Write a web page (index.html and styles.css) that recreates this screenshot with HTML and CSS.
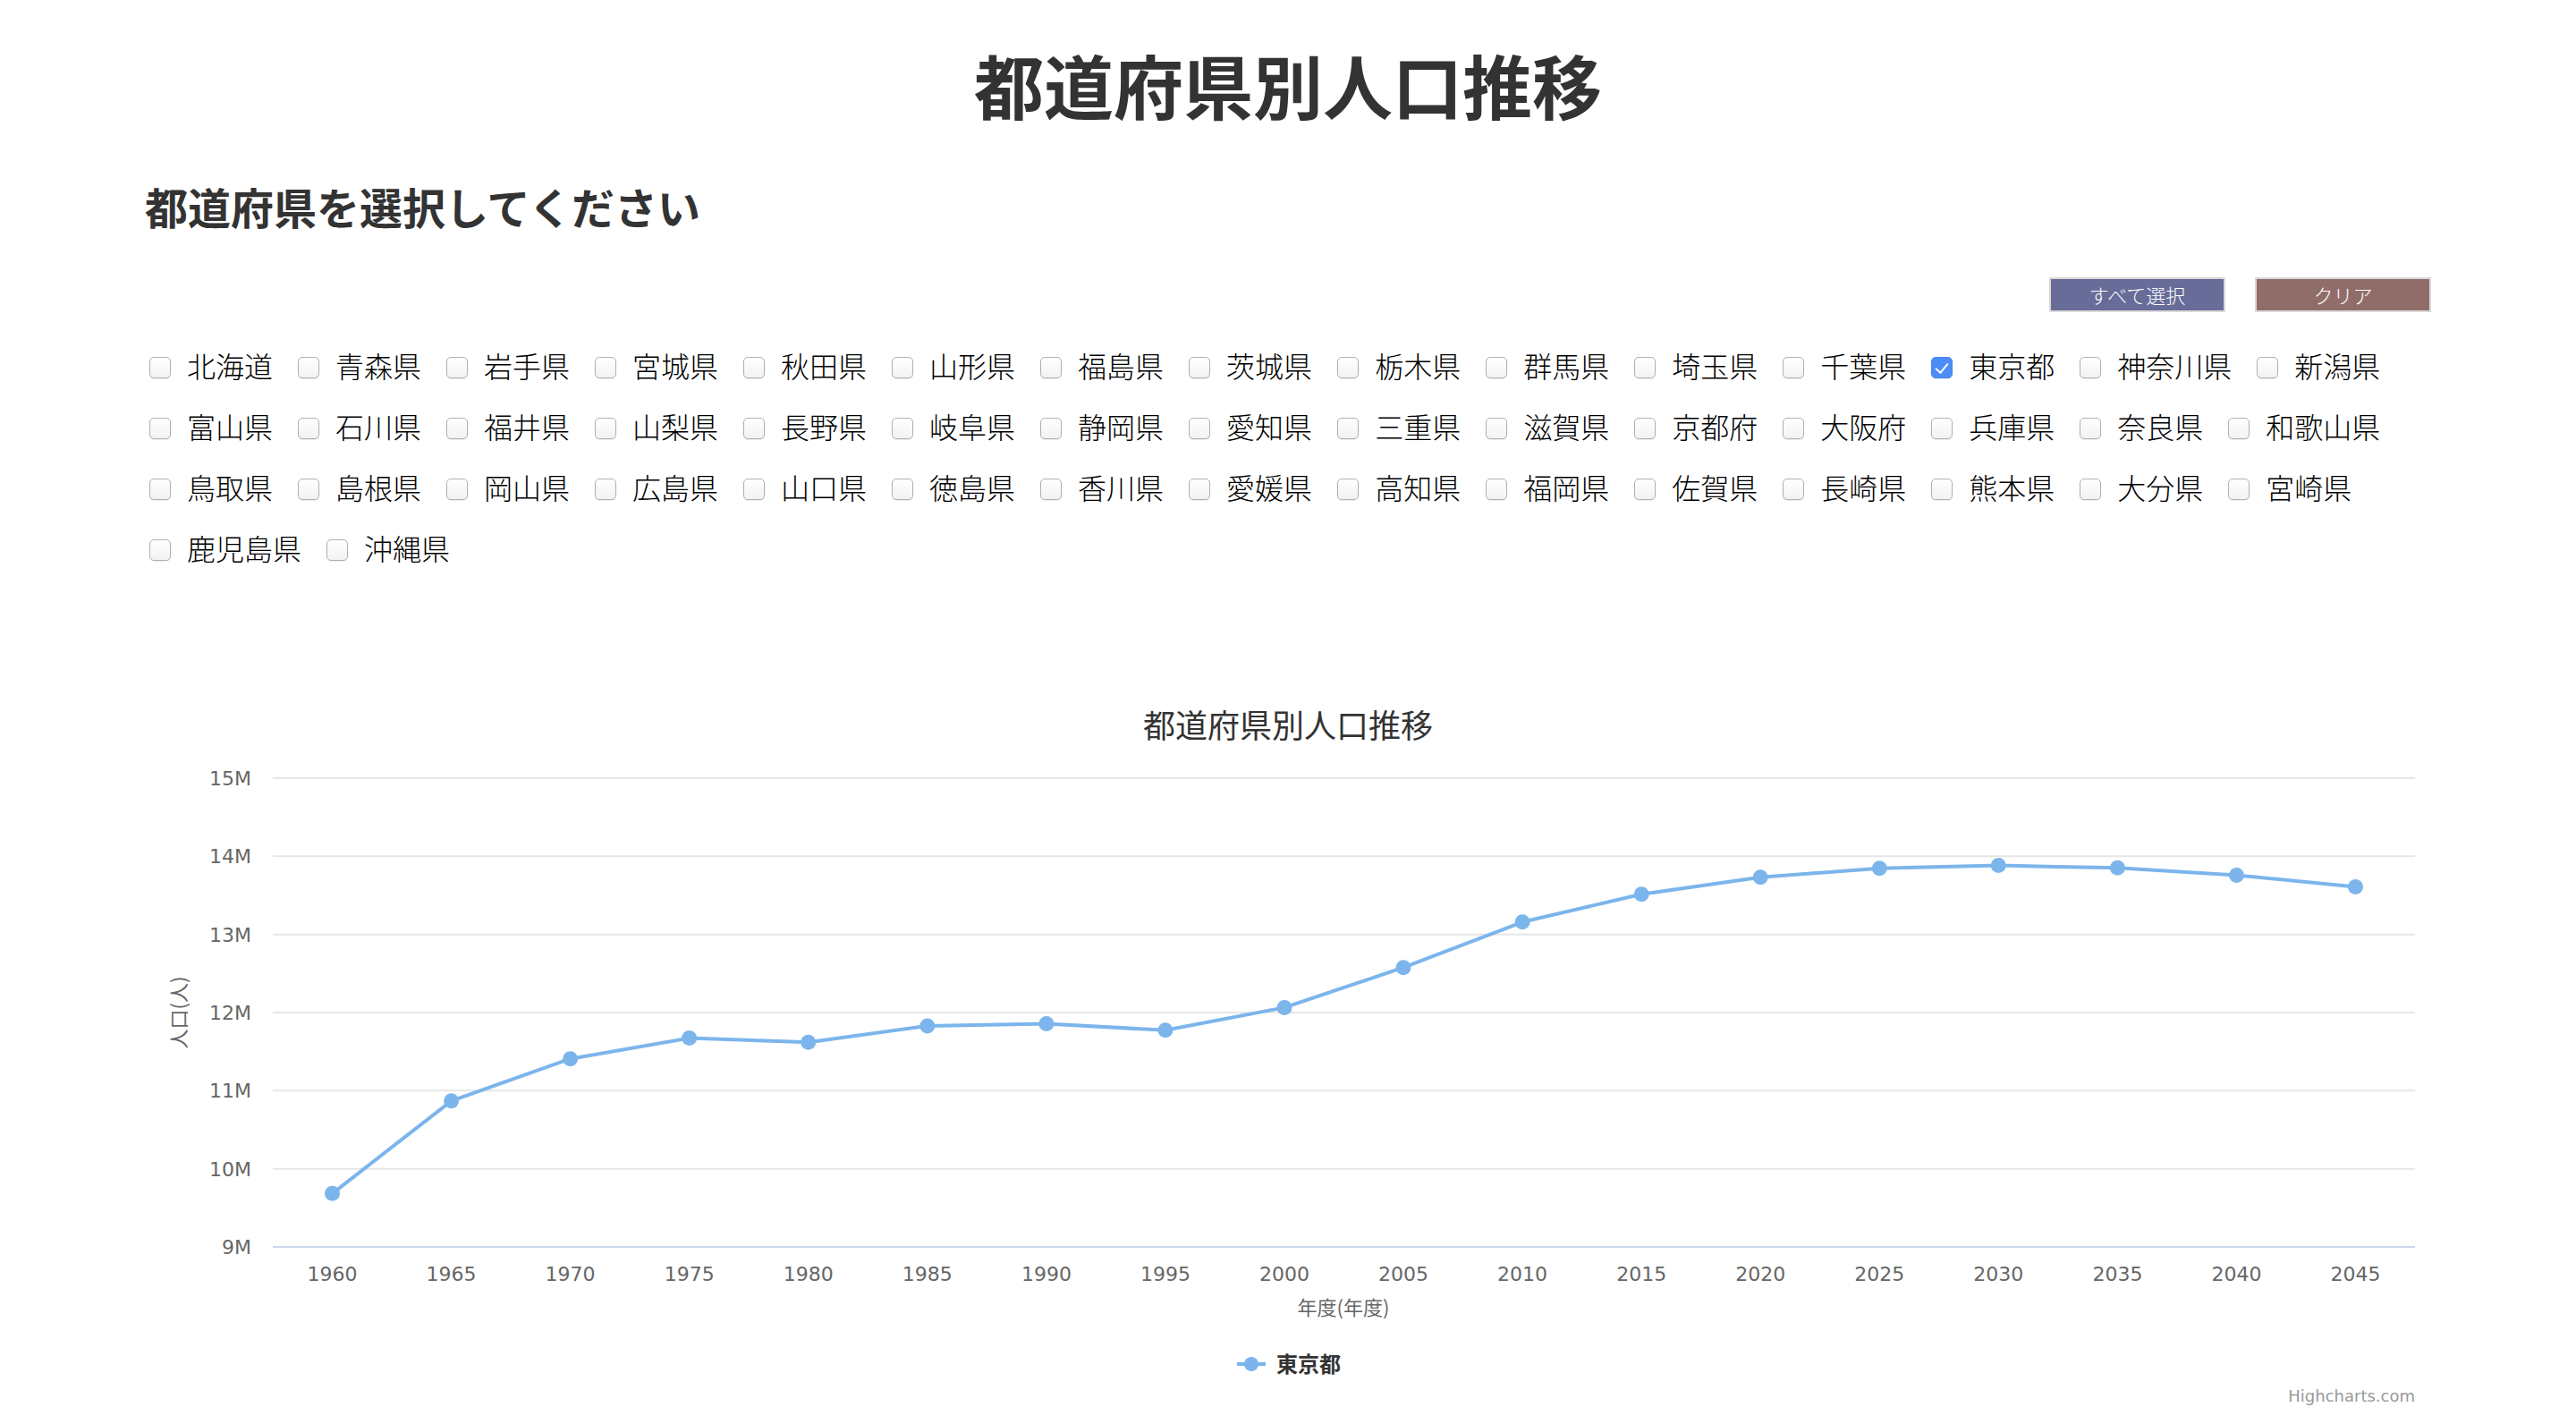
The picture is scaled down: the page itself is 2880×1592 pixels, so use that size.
FILE: index.html
```html
<!DOCTYPE html>
<html lang="ja">
<head>
<meta charset="utf-8">
<title>都道府県別人口推移</title>
<link rel="stylesheet" href="styles.css">
</head>
<body>
<div class="page">
  <h1 class="title">都道府県別人口推移</h1>
  <h2 class="subtitle">都道府県を選択してください</h2>
  <div class="actions">
    <button class="btn btn-all" type="button">すべて選択</button>
    <button class="btn btn-clear" type="button">クリア</button>
  </div>
  <div class="prefs">
    <label class="pref"><input type="checkbox"><span>北海道</span></label>
    <label class="pref"><input type="checkbox"><span>青森県</span></label>
    <label class="pref"><input type="checkbox"><span>岩手県</span></label>
    <label class="pref"><input type="checkbox"><span>宮城県</span></label>
    <label class="pref"><input type="checkbox"><span>秋田県</span></label>
    <label class="pref"><input type="checkbox"><span>山形県</span></label>
    <label class="pref"><input type="checkbox"><span>福島県</span></label>
    <label class="pref"><input type="checkbox"><span>茨城県</span></label>
    <label class="pref"><input type="checkbox"><span>栃木県</span></label>
    <label class="pref"><input type="checkbox"><span>群馬県</span></label>
    <label class="pref"><input type="checkbox"><span>埼玉県</span></label>
    <label class="pref"><input type="checkbox"><span>千葉県</span></label>
    <label class="pref"><input type="checkbox" checked><span>東京都</span></label>
    <label class="pref"><input type="checkbox"><span>神奈川県</span></label>
    <label class="pref"><input type="checkbox"><span>新潟県</span></label>
    <label class="pref"><input type="checkbox"><span>富山県</span></label>
    <label class="pref"><input type="checkbox"><span>石川県</span></label>
    <label class="pref"><input type="checkbox"><span>福井県</span></label>
    <label class="pref"><input type="checkbox"><span>山梨県</span></label>
    <label class="pref"><input type="checkbox"><span>長野県</span></label>
    <label class="pref"><input type="checkbox"><span>岐阜県</span></label>
    <label class="pref"><input type="checkbox"><span>静岡県</span></label>
    <label class="pref"><input type="checkbox"><span>愛知県</span></label>
    <label class="pref"><input type="checkbox"><span>三重県</span></label>
    <label class="pref"><input type="checkbox"><span>滋賀県</span></label>
    <label class="pref"><input type="checkbox"><span>京都府</span></label>
    <label class="pref"><input type="checkbox"><span>大阪府</span></label>
    <label class="pref"><input type="checkbox"><span>兵庫県</span></label>
    <label class="pref"><input type="checkbox"><span>奈良県</span></label>
    <label class="pref"><input type="checkbox"><span>和歌山県</span></label>
    <label class="pref"><input type="checkbox"><span>鳥取県</span></label>
    <label class="pref"><input type="checkbox"><span>島根県</span></label>
    <label class="pref"><input type="checkbox"><span>岡山県</span></label>
    <label class="pref"><input type="checkbox"><span>広島県</span></label>
    <label class="pref"><input type="checkbox"><span>山口県</span></label>
    <label class="pref"><input type="checkbox"><span>徳島県</span></label>
    <label class="pref"><input type="checkbox"><span>香川県</span></label>
    <label class="pref"><input type="checkbox"><span>愛媛県</span></label>
    <label class="pref"><input type="checkbox"><span>高知県</span></label>
    <label class="pref"><input type="checkbox"><span>福岡県</span></label>
    <label class="pref"><input type="checkbox"><span>佐賀県</span></label>
    <label class="pref"><input type="checkbox"><span>長崎県</span></label>
    <label class="pref"><input type="checkbox"><span>熊本県</span></label>
    <label class="pref"><input type="checkbox"><span>大分県</span></label>
    <label class="pref"><input type="checkbox"><span>宮崎県</span></label>
    <label class="pref"><input type="checkbox"><span>鹿児島県</span></label>
    <label class="pref"><input type="checkbox"><span>沖縄県</span></label>
  </div>
  <div class="chart">
    <svg class="chart-svg" width="2556" height="800" viewBox="0 0 2556 800" xmlns="http://www.w3.org/2000/svg">
      <text class="c-title" x="1278" y="49" text-anchor="middle">都道府県別人口推移</text>
      <g class="grid">
        <line x1="143" y1="94" x2="2538" y2="94"/>
        <line x1="143" y1="181.3" x2="2538" y2="181.3"/>
        <line x1="143" y1="268.7" x2="2538" y2="268.7"/>
        <line x1="143" y1="356" x2="2538" y2="356"/>
        <line x1="143" y1="443.3" x2="2538" y2="443.3"/>
        <line x1="143" y1="530.7" x2="2538" y2="530.7"/>
      </g>
      <line class="x-axis" x1="143" y1="618" x2="2538" y2="618"/>
      <g class="y-labels" text-anchor="end">
        <text x="119" y="102">15M</text>
        <text x="119" y="189.3">14M</text>
        <text x="119" y="276.7">13M</text>
        <text x="119" y="364">12M</text>
        <text x="119" y="451.3">11M</text>
        <text x="119" y="538.7">10M</text>
        <text x="119" y="626">9M</text>
      </g>
      <text class="axis-title" transform="translate(46,356) rotate(-90)" text-anchor="middle">人口(人)</text>
      <g class="x-labels" text-anchor="middle">
        <text x="209.5" y="656">1960</text>
        <text x="342.6" y="656">1965</text>
        <text x="475.6" y="656">1970</text>
        <text x="608.7" y="656">1975</text>
        <text x="741.7" y="656">1980</text>
        <text x="874.8" y="656">1985</text>
        <text x="1007.9" y="656">1990</text>
        <text x="1140.9" y="656">1995</text>
        <text x="1274" y="656">2000</text>
        <text x="1407" y="656">2005</text>
        <text x="1540.1" y="656">2010</text>
        <text x="1673.2" y="656">2015</text>
        <text x="1806.2" y="656">2020</text>
        <text x="1939.3" y="656">2025</text>
        <text x="2072.3" y="656">2030</text>
        <text x="2205.4" y="656">2035</text>
        <text x="2338.5" y="656">2040</text>
        <text x="2471.5" y="656">2045</text>
      </g>
      <text class="axis-title" x="1340" y="694" text-anchor="middle">年度(年度)</text>
      <polyline class="series" points="209.5,558.3 342.6,454.8 475.6,407.7 608.7,384.5 741.7,389.3 874.8,370.9 1007.9,368.6 1140.9,375.8 1274,350.4 1407,305.7 1540.1,254.8 1673.2,223.7 1806.2,204.7 1939.3,194.8 2072.3,191.6 2205.4,194.3 2338.5,202.4 2471.5,215.6"/>
      <g class="markers">
        <circle cx="209.5" cy="558.3" r="8.5"/>
        <circle cx="342.6" cy="454.8" r="8.5"/>
        <circle cx="475.6" cy="407.7" r="8.5"/>
        <circle cx="608.7" cy="384.5" r="8.5"/>
        <circle cx="741.7" cy="389.3" r="8.5"/>
        <circle cx="874.8" cy="370.9" r="8.5"/>
        <circle cx="1007.9" cy="368.6" r="8.5"/>
        <circle cx="1140.9" cy="375.8" r="8.5"/>
        <circle cx="1274" cy="350.4" r="8.5"/>
        <circle cx="1407" cy="305.7" r="8.5"/>
        <circle cx="1540.1" cy="254.8" r="8.5"/>
        <circle cx="1673.2" cy="223.7" r="8.5"/>
        <circle cx="1806.2" cy="204.7" r="8.5"/>
        <circle cx="1939.3" cy="194.8" r="8.5"/>
        <circle cx="2072.3" cy="191.6" r="8.5"/>
        <circle cx="2205.4" cy="194.3" r="8.5"/>
        <circle cx="2338.5" cy="202.4" r="8.5"/>
        <circle cx="2471.5" cy="215.6" r="8.5"/>
      </g>
      <g class="legend">
        <line class="legend-line" x1="1221" y1="749" x2="1253" y2="749"/>
        <circle class="legend-dot" cx="1237" cy="749" r="8"/>
        <text class="legend-text" x="1265" y="758">東京都</text>
      </g>
      <text class="credits" x="2538" y="791" text-anchor="end">Highcharts.com</text>
    </svg>
  </div>
</div>
</body>
</html>
```
FILE: styles.css
```css
html, body {
  margin: 0;
  padding: 0;
  background: #ffffff;
}

body {
  width: 2880px;
  height: 1592px;
  overflow: hidden;
  font-family: "Noto Sans CJK JP", "Noto Sans", sans-serif;
  color: #000;
}

.page {
  padding: 46px 162px 0;
}

.title {
  margin: 0;
  font-size: 78px;
  line-height: 96px;
  font-weight: 700;
  color: #333333;
  text-align: center;
}

.subtitle {
  margin: 59px 0 0;
  font-size: 48px;
  line-height: 58px;
  font-weight: 700;
  color: #333333;
}

.actions {
  margin-top: 51px;
  display: flex;
  justify-content: flex-end;
  gap: 33px;
}

.btn {
  width: 197px;
  height: 39px;
  margin: 0;
  padding: 0;
  border: 2px solid #d9d9d9;
  font-family: "Noto Sans CJK JP", sans-serif;
  font-size: 22px;
  font-weight: 300;
  line-height: 35px;
  color: #ffffff;
  cursor: pointer;
}

.btn-all {
  background: #676c99;
}

.btn-clear {
  background: #916d6a;
}

.prefs {
  margin-top: 25px;
  display: flex;
  flex-wrap: wrap;
}

.pref {
  display: flex;
  align-items: center;
  height: 68px;
  margin-right: 23px;
  font-size: 32px;
  font-weight: 300;
  line-height: 40px;
  color: #000;
}

.pref input {
  -webkit-appearance: none;
  appearance: none;
  position: relative;
  box-sizing: border-box;
  width: 24px;
  height: 24px;
  margin: 6px 18px 0 5px;
  border: 1.5px solid #b0b0b0;
  border-radius: 5px;
  background: linear-gradient(#ffffff, #f2f2f2);
  box-shadow: 0 1px 1px rgba(0, 0, 0, 0.08);
}

.pref input:checked {
  background: #4b8cf6;
  border-color: #4686f0;
}

.pref input:checked::after {
  content: "";
  position: absolute;
  left: 7px;
  top: 2.5px;
  width: 6px;
  height: 12px;
  border-right: 2.5px solid #ffffff;
  border-bottom: 2.5px solid #ffffff;
  transform: rotate(40deg);
}

.chart {
  margin-top: 130px;
  width: 2556px;
  height: 800px;
}

.chart-svg {
  display: block;
}

.c-title {
  font-family: "Noto Sans CJK JP", sans-serif;
  font-size: 36px;
  fill: #333333;
}

.grid line {
  stroke: #e6e6e6;
  stroke-width: 2;
}

.x-axis {
  stroke: #ccd6eb;
  stroke-width: 2;
}

.y-labels text,
.x-labels text {
  font-family: "DejaVu Sans", sans-serif;
  font-size: 22px;
  fill: #666666;
}

.axis-title {
  font-family: "Noto Sans CJK JP", sans-serif;
  font-size: 22px;
  fill: #666666;
}

.series {
  fill: none;
  stroke: #7cb5ec;
  stroke-width: 4;
  stroke-linejoin: round;
  stroke-linecap: round;
}

.markers circle,
.legend-dot {
  fill: #7cb5ec;
}

.legend-line {
  stroke: #7cb5ec;
  stroke-width: 4;
}

.legend-text {
  font-family: "Noto Sans CJK JP", sans-serif;
  font-size: 24px;
  font-weight: 700;
  fill: #333333;
}

.credits {
  font-family: "DejaVu Sans", sans-serif;
  font-size: 18px;
  fill: #999999;
}
```
